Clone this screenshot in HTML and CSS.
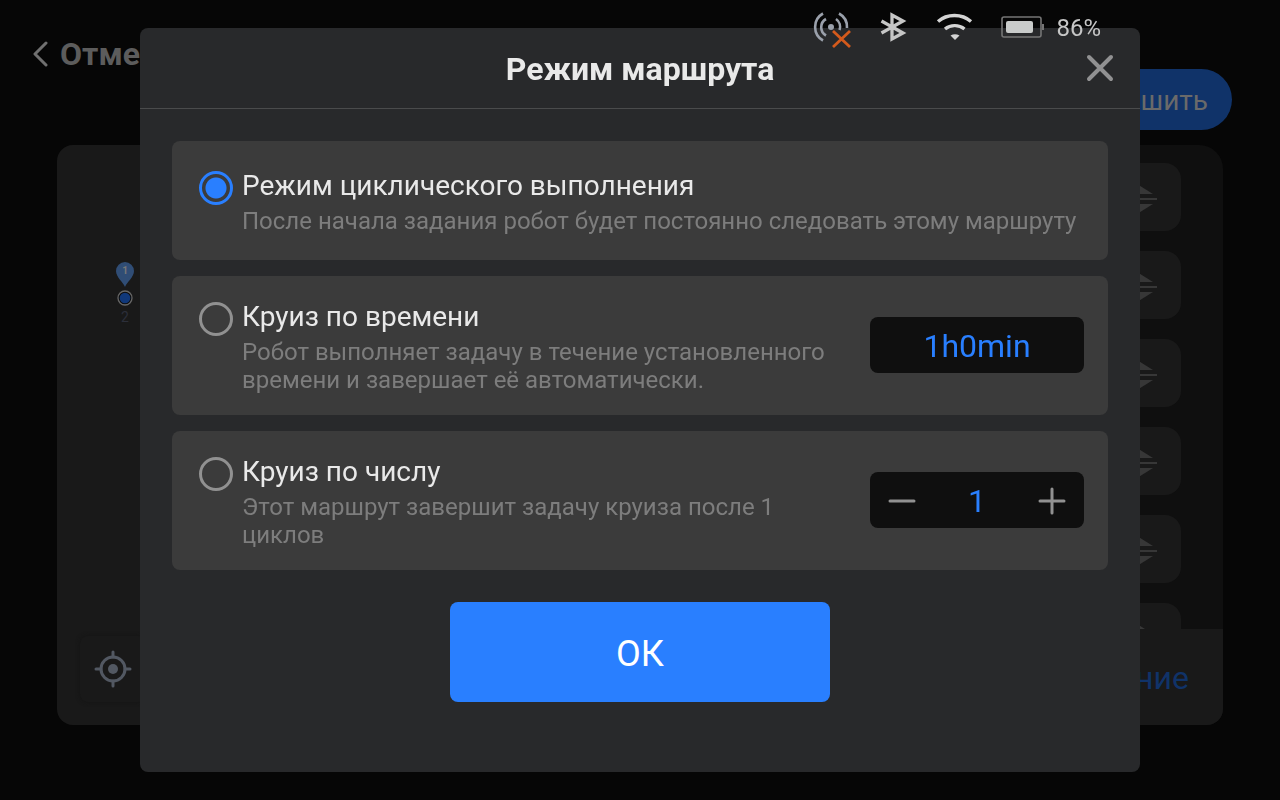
FILE: index.html
```html
<!DOCTYPE html>
<html lang="ru">
<head>
    <meta charset="UTF-8">
    <meta name="viewport" content="width=device-width, initial-scale=1.0">
    <title>Режим маршрута</title>
    <link rel="stylesheet" href="styles.css">
</head>
<body>
    <div class="page">
        <header class="page-header">
            <button type="button" class="back-btn">
                <svg width="16" height="26" viewBox="0 0 16 26"><path d="M14 2 L3 13 L14 24"/></svg>
                <span>Отме</span>
            </button>
            <button type="button" class="finish-btn">шить</button>
        </header>
        <main class="workspace">
            <section class="map">
                <div class="map-point">
                    <svg width="18" height="26" viewBox="0 0 18 26"><path d="M9 25 C7 20 0 15 0 9 A9 9 0 0 1 18 9 C18 15 11 20 9 25 Z" fill="#304d75"/><text x="9" y="12" text-anchor="middle" class="pin-number">1</text></svg>
                    <svg width="16" height="16" viewBox="0 0 16 16"><circle cx="8" cy="8" r="7" fill="#0d0d0d" stroke="#666" stroke-width="1.3"/><circle cx="8" cy="8" r="5.3" fill="#10387a"/></svg>
                    <span class="point-label">2</span>
                </div>
                <button type="button" class="locate-btn" aria-label="Моё местоположение">
                    <svg width="38" height="38" viewBox="0 0 38 38"><circle cx="19" cy="19" r="12"/><path d="M19 2 V7 M19 31 V36 M2 19 H7 M31 19 H36"/><circle class="dot" cx="19" cy="19" r="5"/></svg>
                </button>
            </section>
            <aside class="points">
                <ul class="points-list">
                    <li><svg width="40" height="40" viewBox="0 0 40 40"><path d="M4 17 L20 7 L36 17 Z M0 21 H40 V23 H0 Z M4 27 H36 L20 37 Z"/></svg></li>
                    <li><svg width="40" height="40" viewBox="0 0 40 40"><path d="M4 17 L20 7 L36 17 Z M0 21 H40 V23 H0 Z M4 27 H36 L20 37 Z"/></svg></li>
                    <li><svg width="40" height="40" viewBox="0 0 40 40"><path d="M4 17 L20 7 L36 17 Z M0 21 H40 V23 H0 Z M4 27 H36 L20 37 Z"/></svg></li>
                    <li><svg width="40" height="40" viewBox="0 0 40 40"><path d="M4 17 L20 7 L36 17 Z M0 21 H40 V23 H0 Z M4 27 H36 L20 37 Z"/></svg></li>
                    <li><svg width="40" height="40" viewBox="0 0 40 40"><path d="M4 17 L20 7 L36 17 Z M0 21 H40 V23 H0 Z M4 27 H36 L20 37 Z"/></svg></li>
                    <li><svg width="40" height="40" viewBox="0 0 40 40"><path d="M4 17 L20 7 L36 17 Z M0 21 H40 V23 H0 Z M4 27 H36 L20 37 Z"/></svg></li>
                </ul>
                <button type="button" class="points-footer">ние</button>
            </aside>
        </main>
    </div>

    <div class="overlay">
        <form class="modal" role="dialog" aria-labelledby="modalTitle">
            <div class="modal-header">
                <h1 id="modalTitle">Режим маршрута</h1>
                <button type="button" class="close-btn" aria-label="Закрыть">
                    <svg width="28" height="28" viewBox="0 0 28 28"><path d="M3 3 L25 25 M25 3 L3 25"/></svg>
                </button>
            </div>
            <div class="modal-body">
                <div class="option">
                    <input type="radio" name="mode" id="modeLoop" value="loop" checked>
                    <label for="modeLoop">
                        <span class="option-title">Режим циклического выполнения</span>
                        <span class="option-text">После начала задания робот будет постоянно следовать этому маршруту</span>
                    </label>
                </div>
                <div class="option">
                    <input type="radio" name="mode" id="modeTime" value="time">
                    <label for="modeTime">
                        <span class="option-title">Круиз по времени</span>
                        <span class="option-text">Робот выполняет задачу в течение установленного времени и завершает её автоматически.</span>
                    </label>
                    <button type="button" class="field">1h0min</button>
                </div>
                <div class="option">
                    <input type="radio" name="mode" id="modeCount" value="count">
                    <label for="modeCount">
                        <span class="option-title">Круиз по числу</span>
                        <span class="option-text">Этот маршрут завершит задачу круиза после 1 циклов</span>
                    </label>
                    <div class="field stepper">
                        <button type="button" aria-label="Меньше"><svg width="28" height="28" viewBox="0 0 28 28"><path d="M2 14 H26"/></svg></button>
                        <input type="text" inputmode="numeric" value="1" aria-label="Число циклов">
                        <button type="button" aria-label="Больше"><svg width="28" height="28" viewBox="0 0 28 28"><path d="M2 14 H26 M14 2 V26"/></svg></button>
                    </div>
                </div>
                <button type="button" class="ok-btn">ОК</button>
            </div>
        </form>
    </div>

    <div class="status-bar">
        <svg width="40" height="50" viewBox="0 0 40 50" fill="none">
            <g stroke="#9aa0ab" stroke-width="2.6">
                <path d="M12 13.5 A15.5 15.5 0 0 0 12 40.5"/>
                <path d="M15 19 A9.5 9.5 0 0 0 15 35.5"/>
                <path d="M28 13.5 A15.5 15.5 0 0 1 36 28"/>
                <path d="M25 19 A9.5 9.5 0 0 1 28.5 30"/>
            </g>
            <circle cx="20" cy="27" r="3" fill="#9aa0ab"/>
            <path d="M22 31 L39 47 M39 31 L22 47" stroke="#d45a1c" stroke-width="2.8"/>
        </svg>
        <svg width="28" height="50" viewBox="0 0 28 50" fill="none" stroke="#c6c6c6" stroke-width="3.3">
            <path d="M2.500 21 L24 33 L13 39 V15 L24 21 L2.500 33"/>
        </svg>
        <svg width="38" height="50" viewBox="0 0 38 50" fill="none" stroke="#d4d4d4" stroke-width="3.4">
            <path d="M3 21.500 C12 13.500 27 13.500 36 21.500"/>
            <path d="M10 29 C15.500 24.500 24 24.500 29.500 29"/>
            <path d="M15.500 35.500 Q20 33 24.500 35.500 L20 40 Z" fill="#d4d4d4" stroke="none"/>
        </svg>
        <div class="battery">
            <svg width="44" height="50" viewBox="0 0 44 50">
                <rect x="1" y="17" width="39" height="20" rx="2" fill="none" stroke="#757575" stroke-width="1.600"/>
                <rect x="5" y="21" width="27" height="12" rx="2" fill="#c9cbca"/>
                <rect x="41" y="24" width="2" height="6" fill="#757575"/>
            </svg>
            <span>86%</span>
        </div>
    </div>
</body>
</html>
```

FILE: styles.css
```css
* { box-sizing: border-box; }
body { margin: 0; background: #060606; font-family: Roboto, sans-serif; }
h1, ul { margin: 0; padding: 0; }
button, input { font-family: inherit; margin: 0; padding: 0; border: none; background: none; }
button { cursor: pointer; }
svg { display: block; flex: none; }

/* page under the dialog */
.page { display: flex; flex-direction: column; height: 100vh; overflow: hidden; }
.page-header { display: flex; justify-content: space-between; align-items: flex-start; padding: 36px 48px 15px 32px; }
.back-btn { display: flex; align-items: center; gap: 12px; height: 36px; font-size: 32px; font-weight: bold; color: #5c5c5c; }
.back-btn svg { fill: none; stroke: #707070; stroke-width: 3; stroke-linecap: round; stroke-linejoin: round; }
.finish-btn { width: 200px; height: 61px; margin-top: 33px; padding: 2px 24px 0 0; border-radius: 31px; background: #103369; color: #6a6a6a; font-size: 28px; text-align: right; }
.workspace { display: flex; flex: 1; min-height: 0; margin: 0 57px 75px; }
.map { position: relative; flex: 1; background: #191919; border-radius: 16px 0 0 16px; }
.map-point { position: absolute; left: 57px; top: 117px; width: 22px; display: flex; flex-direction: column; align-items: center; gap: 2px; }
.pin-number { font-size: 10px; font-weight: bold; fill: #777; }
.point-label { font-size: 14px; line-height: 18px; color: #2c2f3a; }
.locate-btn { position: absolute; left: 23px; bottom: 23px; display: grid; place-items: center; width: 66px; height: 66px; border-radius: 8px; background: #191919; box-shadow: 0 0 4px #141414; }
.locate-btn svg { fill: none; stroke: #525862; stroke-width: 3; stroke-linecap: round; }
.locate-btn .dot { fill: #525862; stroke: none; }
.points { display: flex; flex-direction: column; width: 400px; background: #0f0f0f; border-radius: 0 24px 16px 0; overflow: hidden; }
.points-list { display: flex; flex-direction: column; gap: 20px; flex: 1; min-height: 0; padding: 18px 42px 0; overflow: hidden; list-style: none; }
.points-list li { display: flex; flex: none; align-items: center; justify-content: flex-end; height: 68px; padding-right: 24px; border-radius: 16px; background: #191919; }
.points-list svg { fill: #373737; }
.points-footer { flex: none; height: 96px; padding: 2px 34px 0 0; background: #191919; color: #103369; font-size: 32px; text-align: right; }

/* dialog */
.overlay { position: fixed; inset: 0; display: flex; justify-content: center; padding: 28px; }
.modal { display: flex; flex-direction: column; width: 100%; max-width: 1000px; border-radius: 8px; background: #28292b; overflow: auto; }
.modal-header { display: grid; grid-template-columns: 1fr auto 1fr; align-items: center; height: 81px; flex: none; padding: 0 16px; border-bottom: 1px solid #4a4b4c; }
.modal-header h1 { grid-column: 2; padding-top: 2px; font-size: 32px; line-height: 40px; color: #e9e9e9; }
.close-btn { display: grid; place-items: center; justify-self: end; width: 48px; height: 48px; }
.close-btn svg { fill: none; stroke: #919192; stroke-width: 4; stroke-linecap: round; }
.modal-body { display: flex; flex-direction: column; gap: 16px; padding: 32px; }
.option { display: flex; align-items: center; gap: 9px; min-height: 119px; padding: 24px 24px 21px 27px; border-radius: 8px; background: #3b3b3b; }
.option input[type="radio"] { appearance: none; flex: none; align-self: stretch; width: 34px; height: 34px; margin-top: 2px; border: 3px solid #919191; border-radius: 50%; }
.option input[type="radio"]:checked { border-color: #297fff; background: radial-gradient(circle, #297fff 10px, transparent 11px); margin-top: 6px; }
.option label { flex: 1; min-width: 0; }
.option-title { display: block; margin-bottom: 4px; font-size: 28px; line-height: 34px; color: #e9e9e9; }
.option-text { display: block; font-size: 24px; line-height: 28px; color: #7d7d7d; }
.field { flex: none; width: 214px; height: 56px; margin: 0 0 4px 16px; padding-top: 1px; border-radius: 8px; background: #0f0f0f; color: #297fff; font-size: 32px; }
.stepper { display: flex; }
.stepper button { display: grid; place-items: center; flex: none; width: 64px; }
.stepper svg { stroke: #919191; stroke-width: 3; stroke-linecap: round; }
.stepper input { flex: 1; min-width: 0; color: inherit; font-size: 32px; text-align: center; }
.ok-btn { align-self: center; width: 380px; height: 100px; margin-top: 16px; padding-top: 4px; border-radius: 8px; background: #297fff; color: #fff; font-size: 36px; }

/* device status, always on top */
.status-bar { position: fixed; top: 0; right: 179px; display: flex; gap: 28px; }
.battery { display: flex; align-items: center; gap: 11px; font-size: 24px; color: #c6c6c6; }
.battery span { padding-top: 6px; }
```
